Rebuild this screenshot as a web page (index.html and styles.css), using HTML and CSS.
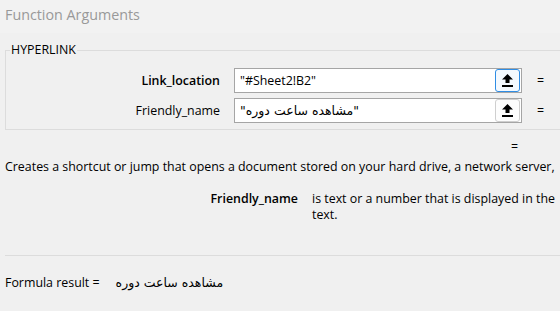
FILE: index.html
```html
<!DOCTYPE html>
<html lang="en">
<head>
  <meta charset="utf-8">
  <title>Function Arguments</title>
  <link rel="stylesheet" href="styles.css">
</head>
<body>
  <div class="dialog">
    <div class="title-bar">Function Arguments</div>
    <div class="dialog-body">
      <fieldset class="func-group">
        <legend>HYPERLINK</legend>
        <div class="arg-row">
          <label class="arg-label arg-label-required">Link_location</label>
          <div class="arg-input">
            <span class="arg-value">"#Sheet2!B2"</span>
            <button class="collapse-button collapse-button-focused">
              <svg width="11" height="13" viewBox="0 0 11 13"><path d="M5.5 0 L11 5.5 L7.5 5.5 L7.5 9 L3.5 9 L3.5 5.5 L0 5.5 Z" fill="#000"/><rect x="0" y="11" width="11" height="2" fill="#000"/></svg>
            </button>
          </div>
          <span class="arg-eq">=</span>
        </div>
        <div class="arg-row">
          <label class="arg-label">Friendly_name</label>
          <div class="arg-input">
            <span class="arg-value"><span dir="rtl" class="rtl-text">"مشاهده ساعت دوره"</span></span>
            <button class="collapse-button">
              <svg width="11" height="13" viewBox="0 0 11 13"><path d="M5.5 0 L11 5.5 L7.5 5.5 L7.5 9 L3.5 9 L3.5 5.5 L0 5.5 Z" fill="#000"/><rect x="0" y="11" width="11" height="2" fill="#000"/></svg>
            </button>
          </div>
          <span class="arg-eq">=</span>
        </div>
      </fieldset>

      <div class="total-eq">=</div>
      <p class="func-desc">Creates a shortcut or jump that opens a document stored on your hard drive, a network server,</p>

      <div class="arg-help">
        <span class="arg-help-name">Friendly_name</span>
        <span class="arg-help-text">is text or a number that is displayed in the<br>text.</span>
      </div>

      <div class="result-row">
        <span>Formula result =</span>
        <span class="result-value rtl-text" dir="rtl">مشاهده ساعت دوره</span>
      </div>
    </div>
  </div>
</body>
</html>
```

FILE: styles.css
```css
body {
  margin: 0;
  padding: 0;
  background-color: #f0f0f0;
  font-family: 'Open Sans', sans-serif;
  font-size: 12.4px;
  color: #000;
  overflow: hidden;
}
.dialog {
  width: 560px;
}
.title-bar {
  height: 33px;
  line-height: 30px;
  padding-left: 5px;
  background-color: #f2f2f2;
  color: #999;
  font-size: 14.3px;
}
.dialog-body {
  padding: 0 0 0 5px;
}
.func-group {
  margin: 9px 0 0 0;
  padding: 10px 0 6px 0;
  border: 1px solid #dcdcdc;
  border-right: none;
  min-width: 0;
}
.func-group legend {
  margin-left: 4px;
  padding: 0 1px;
  line-height: 16px;
}
.arg-row {
  display: flex;
  align-items: center;
  height: 25px;
  margin-bottom: 5px;
}
.arg-row:last-child {
  margin-bottom: 0;
}
.arg-label {
  width: 214px;
  text-align: right;
}
.arg-label-required {
  font-weight: 600;
}
.arg-input {
  display: flex;
  align-items: center;
  justify-content: space-between;
  box-sizing: border-box;
  width: 288px;
  height: 25px;
  margin-left: 14px;
  background-color: #fff;
  border: 1px solid #a5a5a5;
}
.arg-value {
  padding-left: 5px;
  white-space: nowrap;
}
.rtl-text {
  font-family: 'DejaVu Sans', sans-serif;
  font-size: 12.5px;
  unicode-bidi: embed;
}
.collapse-button {
  display: flex;
  align-items: center;
  justify-content: center;
  box-sizing: border-box;
  width: 25px;
  height: 23px;
  margin-right: 1px;
  padding: 0;
  background-color: #fdfdfd;
  border: 1px solid #cfcfcf;
  border-radius: 3px;
}
.collapse-button-focused {
  background-color: #f4f9fe;
  border-color: #2f8de4;
}
.arg-eq {
  margin-left: 15px;
}
.total-eq {
  margin: 9px 0 0 506px;
  line-height: 16px;
}
.func-desc {
  margin: 4px 0 0 0;
  line-height: 16px;
  white-space: nowrap;
}
.arg-help {
  display: flex;
  margin-top: 16px;
  line-height: 16px;
}
.arg-help-name {
  width: 293px;
  flex-shrink: 0;
  text-align: right;
  font-weight: 600;
}
.arg-help-text {
  margin-left: 14px;
  white-space: nowrap;
}
.result-row {
  display: flex;
  align-items: center;
  gap: 16px;
  margin-top: 32px;
  padding-top: 19px;
  border-top: 1px solid #dcdcdc;
  line-height: 16px;
}
```
